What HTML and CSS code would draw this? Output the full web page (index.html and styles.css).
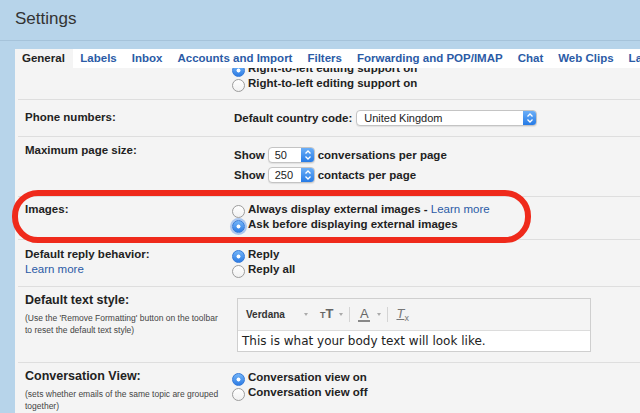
FILE: index.html
```html
<!DOCTYPE html>
<html>
<head>
<meta charset="utf-8">
<title>Settings</title>
<link rel="stylesheet" href="styles.css">
</head>
<body>
<header class="top"><h1 class="title">Settings</h1></header>
<div class="panel">
  <nav class="tabs">
    <span class="tab active">General</span>
    <span class="tab">Labels</span>
    <span class="tab">Inbox</span>
    <span class="tab">Accounts and Import</span>
    <span class="tab">Filters</span>
    <span class="tab">Forwarding and POP/IMAP</span>
    <span class="tab">Chat</span>
    <span class="tab">Web Clips</span>
    <span class="tab">Labs</span>
  </nav>
  <div class="content">
    <div class="row row-rtl">
      <div class="label"></div>
      <div class="ctrl">
        <div class="opt"><span class="radio on"></span>Right-to-left editing support on</div>
        <div class="opt"><span class="radio"></span>Right-to-left editing support on</div>
      </div>
    </div>
    <div class="row row-phone">
      <div class="label">Phone numbers:</div>
      <div class="ctrl ctrl-inline">
        <span class="txt">Default country code:</span>
        <span class="select select-country"><span class="val">United Kingdom</span><span class="stepper"><svg width="14" height="16" viewBox="0 0 14 16"><path d="M4.5 6.5 L7 4 L9.5 6.5 M4.5 9.5 L7 12 L9.5 9.5" fill="none" stroke="#fff" stroke-width="1.3"/></svg></span></span>
      </div>
    </div>
    <div class="row row-size">
      <div class="label">Maximum page size:</div>
      <div class="ctrl ctrl-size">
        <div class="line"><span class="txt">Show</span><span class="select select-num"><span class="val">50</span><span class="stepper"><svg width="14" height="16" viewBox="0 0 14 16"><path d="M4.5 6.5 L7 4 L9.5 6.5 M4.5 9.5 L7 12 L9.5 9.5" fill="none" stroke="#fff" stroke-width="1.3"/></svg></span></span><span class="txt">conversations per page</span></div>
        <div class="line"><span class="txt">Show</span><span class="select select-num"><span class="val">250</span><span class="stepper"><svg width="14" height="16" viewBox="0 0 14 16"><path d="M4.5 6.5 L7 4 L9.5 6.5 M4.5 9.5 L7 12 L9.5 9.5" fill="none" stroke="#fff" stroke-width="1.3"/></svg></span></span><span class="txt">contacts per page</span></div>
      </div>
    </div>
    <div class="row row-images">
      <div class="label">Images:</div>
      <div class="ctrl">
        <div class="opt"><span class="radio"></span>Always display external images -&nbsp;<a class="link">Learn more</a></div>
        <div class="opt"><span class="radio on focus"></span>Ask before displaying external images</div>
      </div>
    </div>
    <div class="row row-reply">
      <div class="label">Default reply behavior:<br><a class="link">Learn more</a></div>
      <div class="ctrl">
        <div class="opt"><span class="radio on"></span>Reply</div>
        <div class="opt"><span class="radio"></span>Reply all</div>
      </div>
    </div>
    <div class="row row-style">
      <div class="label">
        <div class="label-big">Default text style:</div>
        <div class="note">(Use the 'Remove Formatting' button on the toolbar<br>to reset the default text style)</div>
      </div>
      <div class="ctrl">
        <div class="editor">
          <div class="toolbar">
            <span class="tb-font">Verdana</span>
            <span class="tb-arrow a1"></span>
            <span class="tb-size"><span class="s-small">T</span><span class="s-big">T</span></span>
            <span class="tb-arrow a2"></span>
            <span class="tb-sep s1"></span>
            <span class="tb-color">A</span>
            <span class="tb-arrow a3"></span>
            <span class="tb-sep s2"></span>
            <span class="tb-clear"><span class="cl-t">T</span><span class="cl-x">x</span></span>
          </div>
          <div class="editor-body">This is what your body text will look like.</div>
        </div>
      </div>
    </div>
    <div class="row row-conv">
      <div class="label">
        <div class="label-big">Conversation View:</div>
        <div class="note">(sets whether emails of the same topic are grouped<br>together)</div>
      </div>
      <div class="ctrl">
        <div class="opt"><span class="radio on"></span>Conversation view on</div>
        <div class="opt"><span class="radio"></span>Conversation view off</div>
      </div>
    </div>
  </div>
</div>
<div class="highlight"></div>
</body>
</html>
```

FILE: styles.css
```css
html, body {
  margin: 0;
  padding: 0;
}
body {
  width: 640px;
  height: 413px;
  overflow: hidden;
  background: #b7d4ea;
  font-family: "Liberation Sans", Arial, sans-serif;
  color: #222;
  position: relative;
}
.top {
  height: 40px;
  border-bottom: 1px solid #a6c3da;
  display: flex;
  align-items: center;
  padding-left: 15px;
}
.title {
  margin: 0;
  font-size: 17px;
  font-weight: normal;
  color: #333;
  position: relative;
  top: -1px;
}
.panel {
  margin: 8px 0 0 15px;
  width: 625px;
  background: #f4f4f4;
  height: 364px;
  overflow: hidden;
}
.tabs {
  display: flex;
  height: 19px;
  align-items: center;
  background: #fff;
  white-space: nowrap;
  overflow: hidden;
}
.tab {
  padding: 0 7.5px;
  font-size: 11.5px;
  font-weight: bold;
  color: #2b5ba6;
  line-height: 19px;
  flex: none;
}
.tab.active {
  color: #222;
  background: #f4f4f4;
  padding-left: 7px;
  padding-right: 8px;
}
.content {
  overflow: hidden;
  height: 345px;
  margin-left: 3px;
}
.row {
  display: flex;
  border-bottom: 1px solid #dedede;
  padding-left: 7px;
  font-size: 11.5px;
  font-weight: bold;
  line-height: 15px;
}
.label {
  width: 207px;
  flex: none;
}
.ctrl {
  flex: 1;
}
.opt {
  display: flex;
  align-items: center;
  height: 15px;
  white-space: nowrap;
}
.radio {
  width: 13px;
  height: 13px;
  box-sizing: border-box;
  border-radius: 50%;
  border: 1px solid #9c9c9c;
  background: linear-gradient(#ffffff, #f1f1f1);
  flex: none;
  margin-right: 3px;
  position: relative;
  top: 1.5px;
}
.radio.on {
  border-color: #3479d8;
  background: radial-gradient(circle, #ffffff 0 1.7px, rgba(255,255,255,0) 2.3px), linear-gradient(#74b5f8, #2d7ce4);
}
.radio.focus {
  box-shadow: 0 0 0 2px rgba(110, 160, 235, 0.55);
}
.link {
  color: #2b5ba6;
  font-weight: normal;
}
.row-rtl {
  margin-top: -7px;
  padding-bottom: 8px;
}
.row-phone {
  height: 36px;
  align-items: center;
}
.row-phone .label {
  position: relative;
  top: -1px;
}
.ctrl-inline {
  display: flex;
  align-items: center;
  padding-left: 2px;
}
.ctrl-inline .txt {
  margin-right: 4px;
}
.select {
  display: inline-flex;
  height: 16px;
  box-sizing: border-box;
  border: 1px solid #c4c4c4;
  border-radius: 4px;
  background: #fff;
  box-shadow: 0 1px 1px rgba(0,0,0,0.08);
  font-weight: normal;
  font-size: 11px;
  line-height: 14px;
  color: #222;
  overflow: hidden;
}
.select .val {
  flex: 1;
  padding-left: 7px;
}
.stepper {
  width: 14px;
  height: 16px;
  margin: -1px -1px -1px 0;
  border-radius: 0 4px 4px 0;
  background: linear-gradient(#70b2f9, #2177e4);
  display: flex;
}
.select-country {
  width: 181px;
}
.select-num {
  width: 47px;
  margin: 0 3px 0 3px;
}
.select-num .val {
  padding-left: 6px;
}
.row-size {
  padding-top: 6px;
  padding-bottom: 11px;
}
.ctrl-size {
  padding-top: 2px;
  padding-left: 2px;
}
.ctrl-size .line {
  display: flex;
  align-items: center;
  height: 20px;
}
.row-images {
  padding-top: 5px;
  padding-bottom: 7px;
}
.row-reply {
  padding-top: 7px;
  padding-bottom: 9px;
}
.row-style {
  padding-top: 6px;
  padding-bottom: 10px;
}
.label-big {
  font-size: 12.5px;
}
.note {
  font-size: 8.5px;
  font-weight: normal;
  color: #444;
  line-height: 12px;
  margin-top: 4px;
}
.editor {
  margin-top: 5px;
  margin-left: 5px;
  width: 354px;
  box-sizing: border-box;
  border: 1px solid #cfcfcf;
}
.toolbar {
  height: 31px;
  border-bottom: 1px solid #dcdcdc;
  display: flex;
  align-items: center;
  padding-left: 8px;
  background: #f4f4f4;
}
.tb-font {
  font-size: 10px;
  font-weight: bold;
  color: #333;
  width: 39px;
}
.tb-arrow {
  width: 0;
  height: 0;
  border-left: 2.5px solid transparent;
  border-right: 2.5px solid transparent;
  border-top: 3px solid #aaa;
}
.a1 { margin-left: 19px; }
.tb-size {
  margin-left: 12px;
  color: #666;
  font-weight: bold;
  display: flex;
  align-items: baseline;
  line-height: 12px;
}
.s-small { font-size: 9px; }
.s-big { font-size: 13px; }
.a2 { margin-left: 6px; }
.tb-sep {
  width: 1px;
  height: 15px;
  background: #d4d4d4;
}
.s1 { margin-left: 6px; }
.tb-color {
  margin-left: 8px;
  font-size: 13px;
  font-weight: normal;
  color: #666;
  width: 12px;
  text-align: center;
  line-height: 12px;
  border-bottom: 2px solid #888;
}
.a3 { margin-left: 7px; }
.s2 { margin-left: 6px; }
.tb-clear {
  margin-left: 8px;
  color: #777;
  font-weight: normal;
  display: flex;
  align-items: baseline;
}
.cl-t {
  font-size: 13px;
  font-style: italic;
  text-decoration: underline;
}
.cl-x {
  font-size: 9px;
  position: relative;
  top: 3px;
}
.editor-body {
  height: 20px;
  background: #fff;
  font-family: "DejaVu Sans", Verdana, sans-serif;
  font-size: 12px;
  font-weight: normal;
  line-height: 20px;
  padding-left: 4px;
  color: #222;
}
.row-conv {
  padding-top: 6px;
  padding-bottom: 10px;
}
.row-conv .ctrl {
  padding-top: 1px;
}
.highlight {
  position: absolute;
  left: 12px;
  top: 190px;
  width: 519px;
  height: 53px;
  box-sizing: border-box;
  border: 6px solid #ef2a1b;
  border-radius: 26px;
}
```
